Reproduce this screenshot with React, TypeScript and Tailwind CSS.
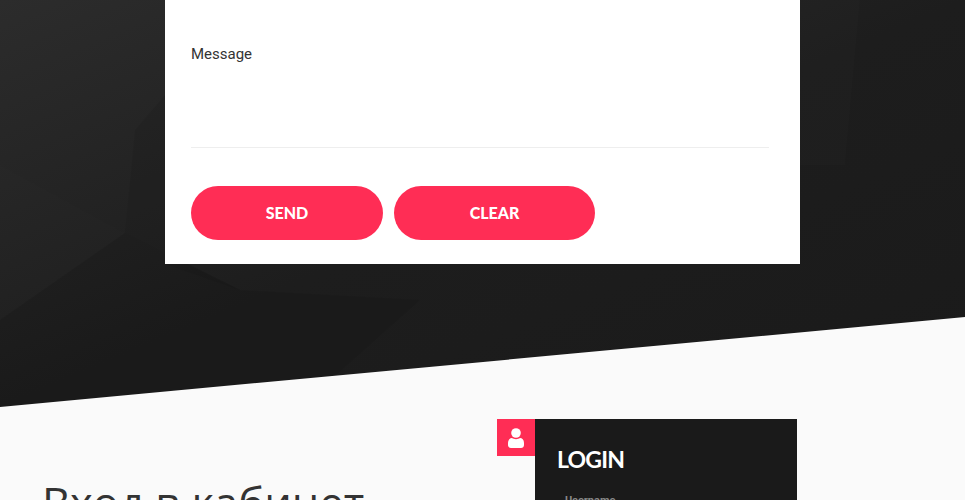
const facets = [
  { points: '0,320 125,233 240,290 420,300 300,407 0,407', fill: '#000', opacity: 0.07 },
  { points: '165,95 135,130 125,233 240,290 165,264', fill: '#000', opacity: 0.06 },
  { points: '0,165 125,233 0,320', fill: '#fff', opacity: 0.006 },
  { points: '800,0 860,0 845,165 800,165', fill: '#fff', opacity: 0.012 },
]

function Polygons() {
  return (
    <svg className="absolute inset-0 h-full w-full" viewBox="0 0 965 407" preserveAspectRatio="none">
      {facets.map((f) => (
        <polygon key={f.points} points={f.points} fill={f.fill} fillOpacity={f.opacity} />
      ))}
    </svg>
  )
}

function UserIcon() {
  return (
    <svg width="16" height="20" viewBox="0 0 16 20" fill="#fff">
      <circle cx="8" cy="5" r="4.8" />
      <path d="M0 15c0-3.200 2-5 4-5 1 .7 2.500 1.200 4 1.200s3-.5 4-1.200c2 0 4 1.800 4 5v2c0 1.700-1.300 3-3 3H3c-1.700 0-3-1.300-3-3z" />
    </svg>
  )
}

export default function App() {
  return (
    <div className="h-[500px] overflow-hidden bg-[#fafafa] font-['Roboto',sans-serif]">
      <section className="relative h-[407px] bg-gradient-to-br from-[#2c2c2c] via-[#1d1d1d] to-[#1a1a1a]">
        <Polygons />
        <div className="relative mx-auto h-[264px] w-[635px] bg-white px-[26px] pt-[44px]">
          <label className="block text-[15px] leading-5 text-[#333]">Message</label>
          <div className="mr-[5px] mt-[83px] border-b border-[#eee]" />
          <div className="mt-[38px] flex gap-[11px]">
            <button className="h-[54px] w-[192px] rounded-[27px] bg-[#ff2d55] font-['Lato',sans-serif] text-[16px] font-black text-white">SEND</button>
            <button className="h-[54px] w-[201px] rounded-[27px] bg-[#ff2d55] font-['Lato',sans-serif] text-[16px] font-black text-white">CLEAR</button>
          </div>
        </div>
        {/* diagonal edge of the light section */}
        <svg className="absolute inset-0 h-full w-full" viewBox="0 0 965 407" preserveAspectRatio="none">
          <polygon points="0,407 965,317 965,407" fill="#fafafa" />
        </svg>
      </section>
      <section className="relative flex h-[93px] items-start">
        <h1 className="ml-[42px] mt-[66px] whitespace-nowrap font-['Open_Sans',sans-serif] text-[43.5px] font-normal leading-[60px] text-[#333]">Вход в кабинет</h1>
        <div className="absolute left-[497px] top-[12px] flex">
          <div className="flex h-[37px] w-[38px] items-center justify-center bg-[#ff2d55]">
            <UserIcon />
          </div>
          <div className="h-[200px] w-[262px] bg-[#1a1a1a] pl-[22px] pt-[26px]">
            <h2 className="font-['Lato',sans-serif] text-[23px] font-bold leading-7 tracking-[-0.8px] text-white">LOGIN</h2>
            <div className="ml-[8px] mt-[20px] text-[11px] font-bold leading-4 text-[#888]">Username</div>
          </div>
        </div>
      </section>
    </div>
  )
}
